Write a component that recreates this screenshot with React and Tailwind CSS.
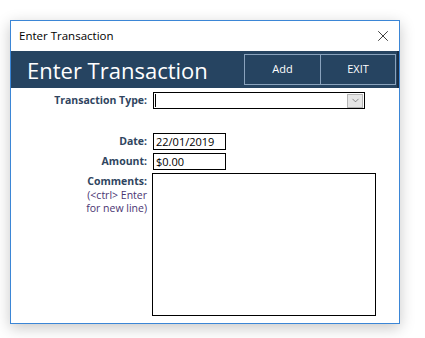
import { X, ChevronDown } from "lucide-react";

function Label({ children }) {
  return (
    <div className="w-[137px] pr-[1px] text-right text-[10.5px] font-bold leading-[17px] text-[#2f4560]">
      {children}
    </div>
  );
}

export default function App() {
  return (
    <div className="min-h-screen bg-white pl-[10px] pt-[20px] font-['Open_Sans',sans-serif]">
      <div className="flex h-[304px] w-[390px] flex-col border border-[#3b86d6] bg-white shadow-[0_4px_14px_rgba(0,0,0,0.22)]">
        {/* title bar */}
        <div className="flex h-[30px] items-center justify-between pl-[8px] pr-[7px]">
          <span className="text-[11.5px] text-black">Enter Transaction</span>
          <X size={18} strokeWidth={1} className="text-black" />
        </div>

        {/* header band */}
        <div className="flex h-[37px] items-center justify-between border-r-2 border-[#1c2f45] bg-[#264461] pl-[16px] pr-[1px]">
          <span className="text-[22px] leading-none text-white">Enter Transaction</span>
          <div className="flex h-[31px] border border-[#8aa3bd]">
            <button className="w-[76px] border-r border-[#8aa3bd] text-[11px] text-white">Add</button>
            <button className="w-[74px] text-[11px] text-white">EXIT</button>
          </div>
        </div>

        {/* form */}
        <div className="flex flex-col pt-[4px]">
          <div className="flex">
            <Label>Transaction Type:</Label>
            <div className="ml-[5px] flex h-[17px] w-[212px] items-center justify-between border border-black bg-white pl-[1px]">
              <div className="h-[13px] w-px bg-black" />
              <div className="mr-[1px] flex h-[14px] w-[16px] items-center justify-center border border-[#b5b5b5] bg-[#e6e6e6]">
                <ChevronDown size={11} strokeWidth={1.4} className="text-[#555]" />
              </div>
            </div>
          </div>

          <div className="mt-[24px] flex">
            <Label>Date:</Label>
            <div className="ml-[5px] h-[17px] w-[73px] border border-black pl-[2px] text-[11px] leading-[15px] text-black">
              22/01/2019
            </div>
          </div>

          <div className="mt-[3px] flex">
            <Label>Amount:</Label>
            <div className="ml-[5px] h-[17px] w-[73px] border border-black pl-[2px] text-[11px] leading-[15px] text-black">
              $0.00
            </div>
          </div>

          <div className="mt-[3px] flex">
            <div className="flex w-[137px] flex-col pr-[1px] text-right">
              <span className="text-[10.5px] font-bold leading-[16px] text-[#2f4560]">Comments:</span>
              <span className="text-[10.5px] leading-[13px] text-[#4a3572]">(&lt;ctrl&gt; Enter</span>
              <span className="text-[10.5px] leading-[13px] text-[#4a3572]">for new line)</span>
            </div>
            <div className="ml-[4px] h-[143px] w-[224px] border border-black" />
          </div>
        </div>
      </div>
    </div>
  );
}
